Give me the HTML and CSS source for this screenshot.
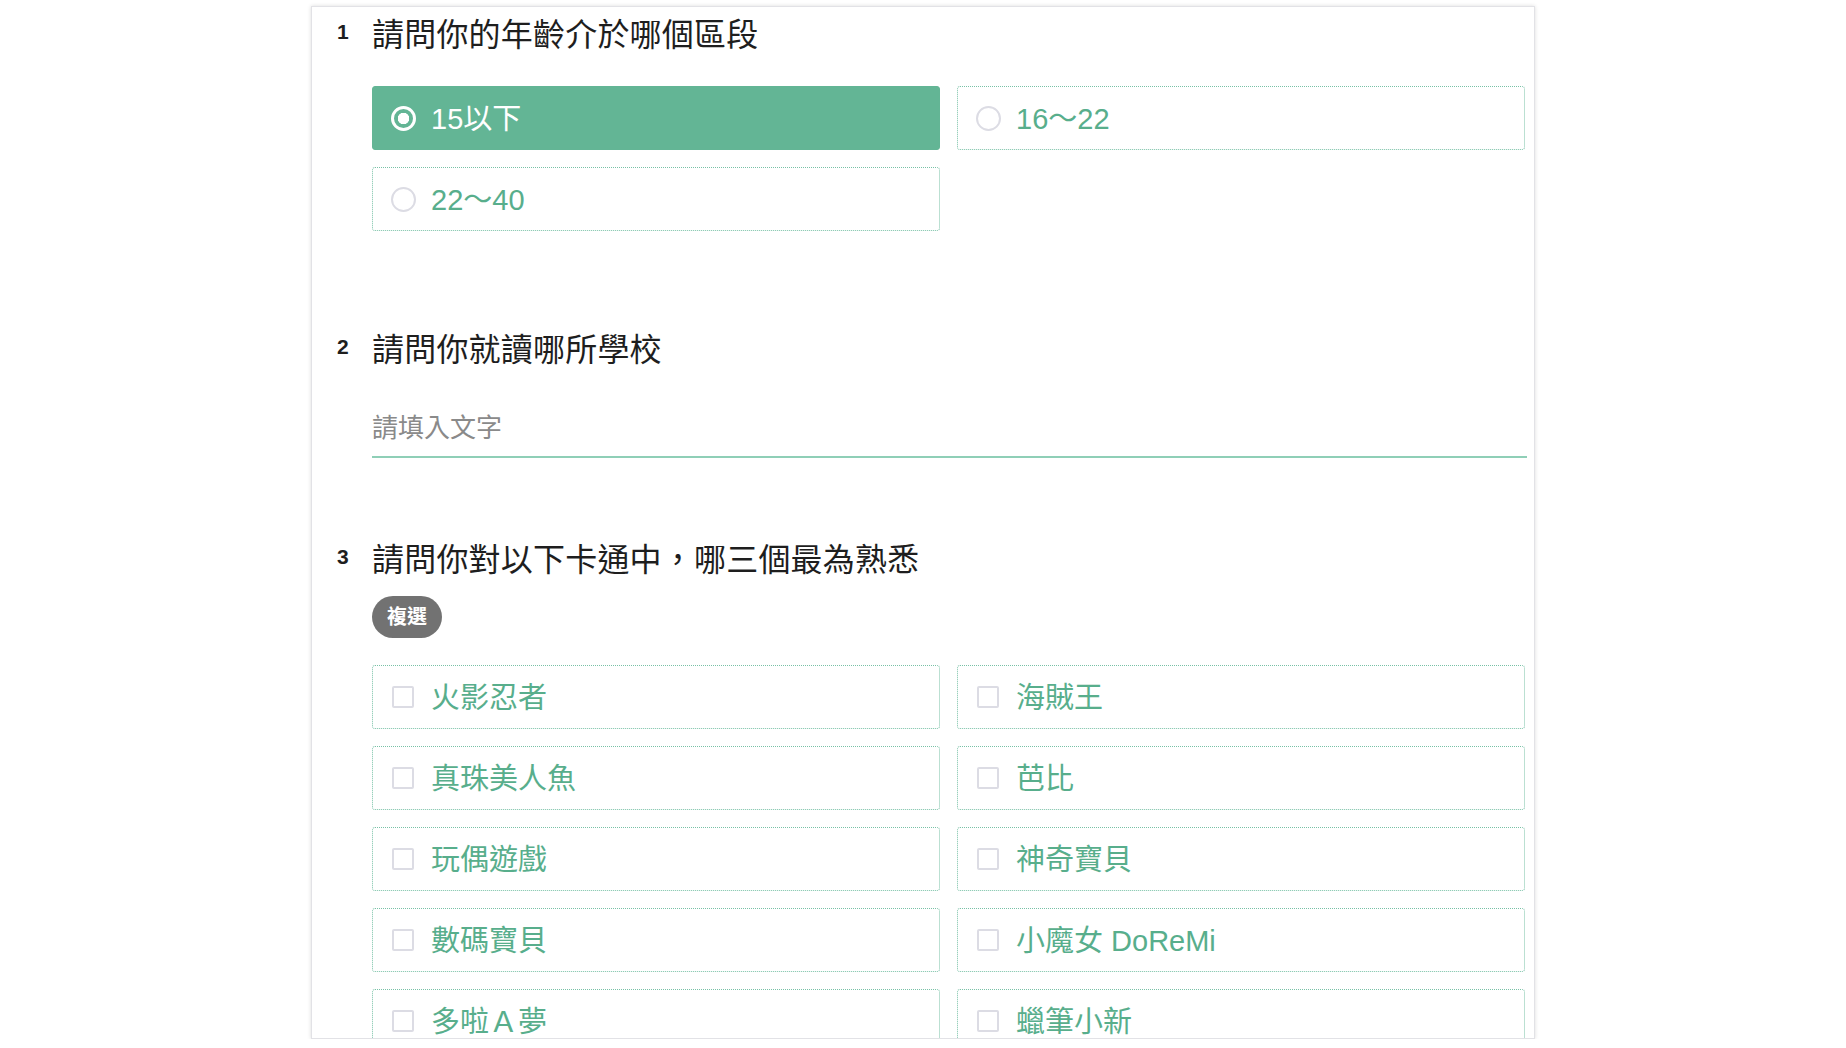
FILE: index.html
```html
<!DOCTYPE html>
<html lang="zh-Hant">
<head>
<meta charset="utf-8">
<title>問卷</title>
<link rel="stylesheet" href="styles.css">
</head>
<body>
<div class="card">
  <section class="question q1">
    <div class="num">1</div>
    <div class="body">
      <h2 class="title">請問你的年齡介於哪個區段</h2>
      <div class="options">
        <div class="option selected"><span class="radio"></span><span class="label">15以下</span></div>
        <div class="option"><span class="radio"></span><span class="label">16～22</span></div>
        <div class="option"><span class="radio"></span><span class="label">22～40</span></div>
      </div>
    </div>
  </section>

  <section class="question q2">
    <div class="num">2</div>
    <div class="body">
      <h2 class="title">請問你就讀哪所學校</h2>
      <input class="text-input" type="text" placeholder="請填入文字">
    </div>
  </section>

  <section class="question q3">
    <div class="num">3</div>
    <div class="body">
      <h2 class="title">請問你對以下卡通中，哪三個最為熟悉</h2>
      <span class="badge">複選</span>
      <div class="options checks">
        <div class="option"><span class="check"></span><span class="label">火影忍者</span></div>
        <div class="option"><span class="check"></span><span class="label">海賊王</span></div>
        <div class="option"><span class="check"></span><span class="label">真珠美人魚</span></div>
        <div class="option"><span class="check"></span><span class="label">芭比</span></div>
        <div class="option"><span class="check"></span><span class="label">玩偶遊戲</span></div>
        <div class="option"><span class="check"></span><span class="label">神奇寶貝</span></div>
        <div class="option"><span class="check"></span><span class="label">數碼寶貝</span></div>
        <div class="option"><span class="check"></span><span class="label">小魔女 DoReMi</span></div>
        <div class="option"><span class="check"></span><span class="label">多啦Ａ夢</span></div>
        <div class="option"><span class="check"></span><span class="label">蠟筆小新</span></div>
      </div>
    </div>
  </section>
</div>
</body>
</html>
```

FILE: styles.css
```css
* { box-sizing: border-box; }

html, body {
  margin: 0;
  padding: 0;
  background: #ffffff;
  font-family: "Liberation Sans", "Noto Sans CJK TC", sans-serif;
  overflow: hidden;
}

.card {
  width: 1224px;
  height: 1033px;
  margin: 6px auto 0;
  background: #fff;
  border: 1px solid #e2e2e6;
  box-shadow: 0 0 4px rgba(0, 0, 0, 0.14);
  padding: 8px 11px 0 24px;
  overflow: hidden;
}

.question {
  display: grid;
  grid-template-columns: 36px 1fr;
}

.num {
  font-size: 21px;
  font-weight: bold;
  line-height: 34px;
  color: #1e1e1e;
  padding-left: 1px;
}

.title {
  margin: 0;
  font-size: 32px;
  font-weight: normal;
  line-height: 40px;
  color: #1e1e1e;
  letter-spacing: 0.2px;
}

.q1 { margin-bottom: 99px; }
.q2 { margin-bottom: 82px; }

.options {
  display: grid;
  grid-template-columns: 1fr 1fr;
  gap: 17px 17px;
  margin-top: 31px;
  width: 1153px;
}

.checks { margin-top: 27px; }

.option {
  height: 64px;
  display: flex;
  align-items: center;
  padding-left: 18px;
  border: 1px dotted #78c1a6;
  border-radius: 3px;
  background: #fff;
  color: #58ae8c;
}

.option.selected {
  background: #63b595;
  border: 1px solid #63b595;
  color: #ffffff;
}

.label {
  font-size: 29px;
  line-height: 36px;
  margin-left: 15px;
  padding-top: 2px;
}

.radio {
  width: 25px;
  height: 25px;
  border-radius: 50%;
  border: 2.5px solid #dcdce4;
  flex: none;
}

.selected .radio {
  border: 3px solid #ffffff;
  background: radial-gradient(circle, #ffffff 0 5.5px, transparent 6px);
}

.check {
  width: 22px;
  height: 22px;
  border: 2px solid #dcdce4;
  border-radius: 2px;
  flex: none;
  margin-left: 1px;
  margin-right: 2px;
}

.text-input {
  display: block;
  width: 1155px;
  margin-top: 40px;
  padding: 0 0 10px 0;
  border: none;
  border-bottom: 2px solid #8fcfb7;
  outline: none;
  font-family: inherit;
  font-size: 26px;
  line-height: 36px;
  height: 48px;
  color: #333;
  background: transparent;
}

.text-input::placeholder {
  color: #8a8a8a;
}

.badge {
  display: inline-block;
  margin-top: 16px;
  height: 42px;
  line-height: 42px;
  padding: 0 15px;
  border-radius: 21px;
  background: #727272;
  color: #ffffff;
  font-size: 20px;
  font-weight: bold;
}
```
